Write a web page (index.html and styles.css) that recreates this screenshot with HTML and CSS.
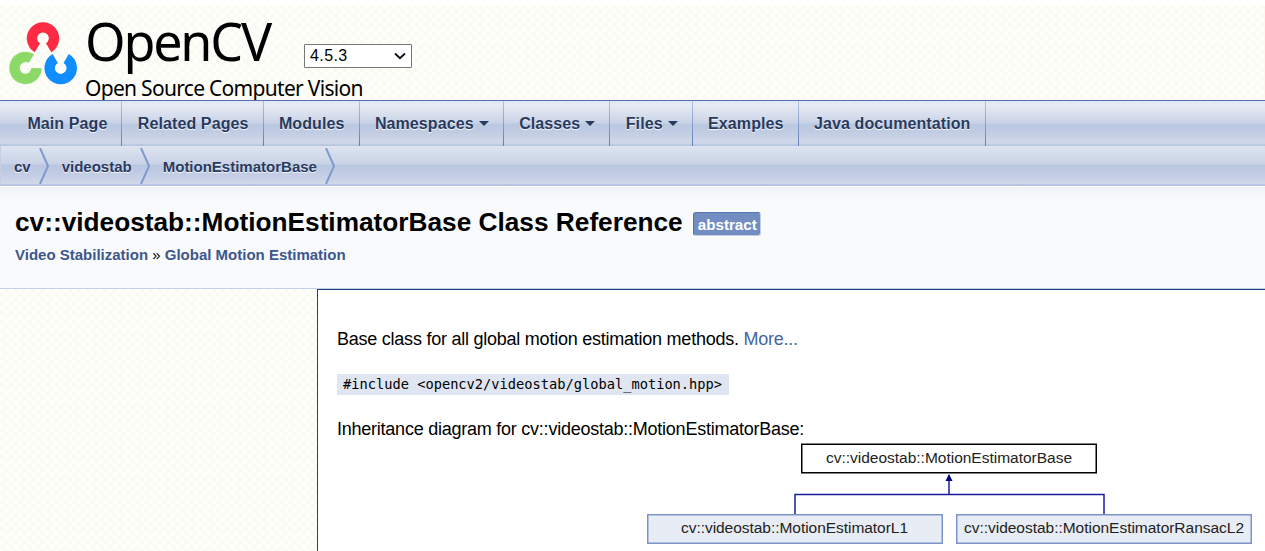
FILE: index.html
```html
<!DOCTYPE html>
<html lang="en">
<head>
<meta charset="utf-8">
<title>OpenCV: cv::videostab::MotionEstimatorBase Class Reference</title>
<link rel="stylesheet" href="styles.css">
</head>
<body>
<header class="masthead">
  <svg class="logo" width="68" height="64" viewBox="0 0 68 64" fill="none" stroke-width="10.4">
    <path stroke="#ff2a44" d="M28.4 25.8A11 11 0 1 1 39.6 25.8"/>
    <path stroke="#8bda67" d="M22.3 36.6A11 11 0 1 0 27.5 46.2"/>
    <path stroke="#128dff" d="M46.2 36.6A11 11 0 1 0 57.2 36.6"/>
  </svg>
  <div class="project">
    <div class="project-row">
      <span class="project-name">OpenCV</span>
      <div class="version"><span>4.5.3</span><svg width="12" height="8" viewBox="0 0 12 8"><path d="M1 1.5 6 6.2 11 1.5" fill="none" stroke="#111" stroke-width="1.9"/></svg></div>
    </div>
    <div class="project-brief">Open Source Computer Vision</div>
  </div>
</header>
<nav class="menu">
  <a>Main Page</a><a>Related Pages</a><a>Modules</a><a class="sub">Namespaces</a><a class="sub">Classes</a><a class="sub">Files</a><a>Examples</a><a>Java documentation</a>
</nav>
<nav class="path">
  <a>cv</a><svg class="sep" width="11" height="36" viewBox="0 0 11 36"><path d="M1 0 9 18 1 36"/></svg>
  <a>videostab</a><svg class="sep" width="11" height="36" viewBox="0 0 11 36"><path d="M1 0 9 18 1 36"/></svg>
  <a>MotionEstimatorBase</a><svg class="sep" width="11" height="36" viewBox="0 0 11 36"><path d="M1 0 9 18 1 36"/></svg>
</nav>
<section class="heading">
  <div class="title"><span>cv::videostab::MotionEstimatorBase Class Reference</span><span class="label">abstract</span></div>
  <div class="groups"><a>Video Stabilization</a> » <a>Global Motion Estimation</a></div>
</section>
<div class="columns">
  <aside class="side"></aside>
  <main class="contents">
    <p class="brief">Base class for all global motion estimation methods. <a>More...</a></p>
    <code class="include">#include &lt;opencv2/videostab/global_motion.hpp&gt;</code>
    <p class="caption">Inheritance diagram for cv::videostab::MotionEstimatorBase:</p>
    <svg class="diagram" width="606" height="102" viewBox="0 0 606 102">
      <rect x="154.75" y="1.25" width="294.5" height="28.5" fill="#fff" stroke="#000" stroke-width="1.5"/>
      <g fill="none" stroke="#1c1c9c" stroke-width="1.5"><path d="M302 32V51.5M148 71V51.5H457V71"/></g>
      <path d="M302 31 305.5 38H298.500z" fill="#00008b"/>
      <rect x=".75" y="71.75" width="294.5" height="28.5" fill="#e8ecf5" stroke="#7b95c9" stroke-width="1.5"/>
      <rect x="309.75" y="71.75" width="294.5" height="28.5" fill="#e8ecf5" stroke="#7b95c9" stroke-width="1.5"/>
      <g class="node-text">
        <text x="179" y="20" textLength="246">cv::videostab::MotionEstimatorBase</text>
        <text x="34" y="90" textLength="227">cv::videostab::MotionEstimatorL1</text>
        <text x="317" y="90" textLength="280">cv::videostab::MotionEstimatorRansacL2</text>
      </g>
    </svg>
  </main>
</div>
</body>
</html>
```
FILE: styles.css
```css
* { box-sizing: border-box; }
body {
  margin: 0;
  height: 551px;
  overflow: hidden;
  display: flex;
  flex-direction: column;
  border-top: 6px solid #fff;
  background: repeating-conic-gradient(#fafaf3 0 25%, #fefefb 0 50%) 0 0 / 9px 9px;
  font-family: "Liberation Sans", Arial, sans-serif;
  color: #000;
}
p { margin: 0; }
.masthead { display: flex; height: 94px; padding-left: 9px; flex: none; }
.logo { margin-top: 16px; }
.project { margin-left: 8px; font-family: "Noto Sans", sans-serif; white-space: nowrap; }
.project-row { display: flex; height: 69px; }
.project-name { font-size: 52px; line-height: 70px; letter-spacing: -2.2px; width: 219px; }
.project-brief { font-size: 21px; line-height: 27px; letter-spacing: -.7px; }
.version {
  display: flex; align-items: center; justify-content: space-between;
  width: 108px; height: 24px; margin-top: 38px; padding: 0 5px;
  border: 1px solid #767676; border-radius: 1px; background: #fff;
  font: 16px "Liberation Sans", sans-serif; letter-spacing: .4px;
}
.menu {
  display: flex; flex: none; height: 46px; padding-left: 12px;
  border-top: 1px solid #5373b4;
  background: linear-gradient(#e1e7f2 0, #e6eaf4 5px, #c9d3e6 22px, #bac8e0 23px, #bfcbe2 30px, #d0d9ea 42px, #b6c4df 44px, #b9c6e1 45px);
}
.menu a {
  display: flex; align-items: center; height: 45px; padding: 0 14px 0 15.4px;
  border-right: 1px solid; border-image: linear-gradient(#b7c4e0, #5c7cb8) 1;
  font-size: 16px; font-weight: bold; letter-spacing: .1px;
  color: #283a5d; text-shadow: 0 1px 1px rgba(255,255,255,.9); white-space: nowrap;
}
.menu .sub::after {
  content: ""; margin-left: 5px;
  border: 5px solid transparent; border-top-color: #283a5d; border-bottom: 0;
}
.path {
  display: flex; flex: none; height: 40px; padding: 0 0 0 13px; align-items: center;
  border-bottom: 2px solid #b9c6e1; border-left: 1px solid #c4cfe5;
  background: linear-gradient(#dee4f0 0, #c9d3e6 18px, #bac7e1 19px, #bfcae3 26px, #cfd7e8 37px);
}
.path a { padding-top: 2px; font-size: 15px; font-weight: bold; color: #283a5d; text-shadow: 0 1px 1px rgba(255,255,255,.9); }
.sep { margin: 2px 12px 0 8px; }
.sep path { fill: none; stroke: #8299cc; stroke-width: 2; }
.heading {
  flex: none; height: 103px; padding: 20px 0 0 15px;
  border-bottom: 1px solid #c4cfe5; border-top: 1px solid #fff;
  background: linear-gradient(#f0f3f9, #f9fafc 12px);
}
.title { display: flex; font-size: 26.24px; line-height: 30px; font-weight: bold; white-space: nowrap; }
.label {
  width: 68px; height: 24px; margin: 5px 0 0 10px; padding-left: 4px;
  border: 1px solid #5373b4; border-right-color: #c4cfe5; border-bottom-color: #c4cfe5; border-radius: 3px;
  background: #728dc1; color: #fff; font-size: 15.2px; line-height: 24px;
}
.groups { margin-top: 9px; font-size: 15px; line-height: 18px; }
.groups a { font-weight: bold; color: #3d578c; }
.columns { display: flex; flex: 1; min-height: 0; }
.side { width: 317px; flex: none; }
.contents {
  flex: 1; padding: 38px 0 0 19px; background: #fff;
  border-top: 1px solid #1d4477; border-left: 1px solid #1d4477;
  font-size: 18px; line-height: 22px; letter-spacing: -.24px; white-space: nowrap;
}
.brief a { color: #4665a2; }
.include {
  display: block; width: 392px; height: 21px; margin: 24px 0 23px; padding-left: 6px;
  background: #dfe5f1; font: 13.7px/21px "DejaVu Sans Mono", monospace; letter-spacing: 0;
}
.diagram { display: block; margin: 3px 0 0 310px; letter-spacing: 0; }
.node-text { font: 15.5px "Liberation Sans", Arial, sans-serif; fill: #222; }
```
